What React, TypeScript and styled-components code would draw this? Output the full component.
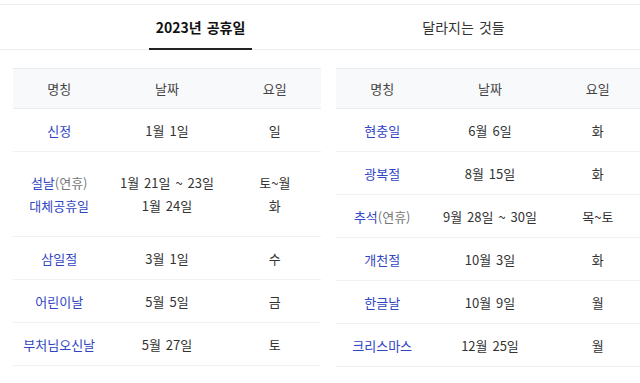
import React from 'react';
import styled, { createGlobalStyle } from 'styled-components';

const GlobalStyle = createGlobalStyle`
    html, body {
        margin: 0;
        padding: 0;
        background: #ffffff;
        overflow: hidden;
    }
    body {
        font-family: "Noto Sans CJK KR", "Noto Sans", sans-serif;
        color: #333333;
    }
`;

interface ITabProps {
    active?: boolean;
}

interface IRowProps {
    tall?: boolean;
}

interface Holiday {
    name: string;
    extra?: string;
    date: string;
    day: string;
}

const Page = styled.div`
    width: 657px;
    padding-top: 4px;
`;

const TabBar = styled.nav`
    display: flex;
    height: 44px;
    padding-left: 149px;
    gap: 160px;
    border-top: 1px solid #ebedf0;
    border-bottom: 1px solid #ebedf0;
`;

const Tab = styled.button<ITabProps>`
    width: 103px;
    padding: 0;
    margin: 0 0 -1px;
    background: none;
    border: none;
    border-bottom: 2px solid ${props => props.active ? '#222222' : 'transparent'};
    font-family: inherit;
    font-size: 14px;
    word-spacing: 2px;
    font-weight: ${props => props.active ? 700 : 400};
    color: ${props => props.active ? '#111111' : '#333333'};
    cursor: pointer;
`;

const Tables = styled.div`
    display: grid;
    grid-template-columns: 308px 308px;
    gap: 15px;
    padding: 18px 13px 0;
`;

const Table = styled.div`
    display: flex;
    flex-direction: column;
    border-top: 1px solid #e9ecf0;
`;

const HeadRow = styled.div`
    display: grid;
    grid-template-columns: 30% 40% 30%;
    align-items: center;
    height: 39px;
    background: #f8f9fb;
    border-bottom: 1px solid #e9ecf0;
    font-size: 13px;
    color: #444444;
    text-align: center;
`;

const Row = styled.div<IRowProps>`
    display: grid;
    grid-template-columns: 30% 40% 30%;
    align-items: center;
    height: ${props => props.tall ? '84px' : '42px'};
    border-bottom: 1px solid #f0f1f3;
    font-size: 13px;
    word-spacing: 2px;
    text-align: center;
`;

const Cell = styled.div`
    display: flex;
    flex-direction: column;
    line-height: 23px;
`;

const Name = styled.span`
    color: #2f45c4;
`;

const Extra = styled.span`
    color: #777777;
`;

const left: Holiday[][] = [
    [{ name: '신정', date: '1월 1일', day: '일' }],
    [
        { name: '설날', extra: '(연휴)', date: '1월 21일 ~ 23일', day: '토~월' },
        { name: '대체공휴일', date: '1월 24일', day: '화' },
    ],
    [{ name: '삼일절', date: '3월 1일', day: '수' }],
    [{ name: '어린이날', date: '5월 5일', day: '금' }],
    [{ name: '부처님오신날', date: '5월 27일', day: '토' }],
];

const right: Holiday[][] = [
    [{ name: '현충일', date: '6월 6일', day: '화' }],
    [{ name: '광복절', date: '8월 15일', day: '화' }],
    [{ name: '추석', extra: '(연휴)', date: '9월 28일 ~ 30일', day: '목~토' }],
    [{ name: '개천절', date: '10월 3일', day: '화' }],
    [{ name: '한글날', date: '10월 9일', day: '월' }],
    [{ name: '크리스마스', date: '12월 25일', day: '월' }],
];

const HolidayTable = ({ rows }: { rows: Holiday[][] }) => (
    <Table>
        <HeadRow>
            <div>명칭</div>
            <div>날짜</div>
            <div>요일</div>
        </HeadRow>
        {rows.map((group, i) => (
            <Row key={i} tall={group.length > 1}>
                <Cell>
                    {group.map(h => (
                        <div key={h.name}>
                            <Name>{h.name}</Name>
                            {h.extra && <Extra>{h.extra}</Extra>}
                        </div>
                    ))}
                </Cell>
                <Cell>
                    {group.map(h => <div key={h.name}>{h.date}</div>)}
                </Cell>
                <Cell>
                    {group.map(h => <div key={h.name}>{h.day}</div>)}
                </Cell>
            </Row>
        ))}
    </Table>
);

export default function App() {
    return (
        <Page>
            <GlobalStyle />
            <TabBar>
                <Tab active>2023년 공휴일</Tab>
                <Tab>달라지는 것들</Tab>
            </TabBar>
            <Tables>
                <HolidayTable rows={left} />
                <HolidayTable rows={right} />
            </Tables>
        </Page>
    );
}
